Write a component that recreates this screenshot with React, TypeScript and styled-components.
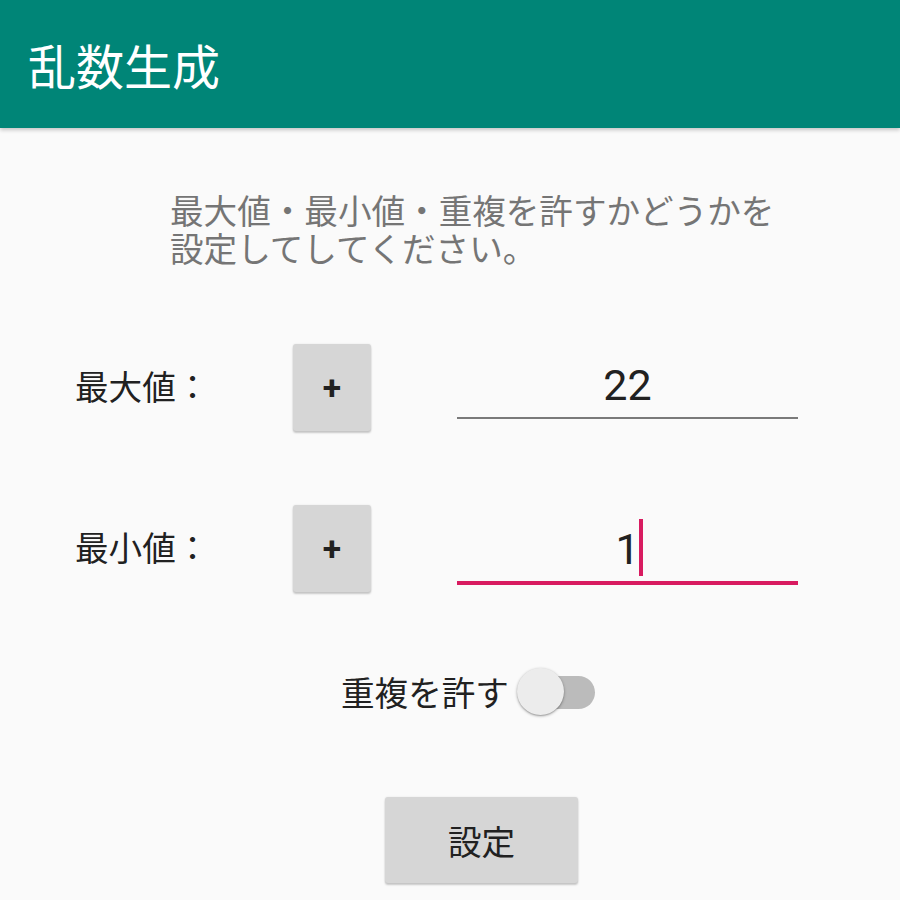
import React from "react";
import styled, { createGlobalStyle, css } from "styled-components";

const GlobalStyle = createGlobalStyle`
  html, body {
    margin: 0;
    padding: 0;
    background: #fafafa;
  }
  body {
    font-family: "Noto Sans CJK JP", "Noto Sans", sans-serif;
    color: #212121;
  }
  * { box-sizing: border-box; }
`;

const Screen = styled.div`
  width: 900px;
  height: 900px;
  background: #fafafa;
  overflow: hidden;
  display: flex;
  flex-direction: column;
`;

const AppBar = styled.header`
  height: 128px;
  flex: 0 0 128px;
  background: #008577;
  display: flex;
  align-items: center;
  padding-left: 28px;
  box-shadow: 0 2px 4px rgba(0, 0, 0, 0.22);
  position: relative;
  z-index: 1;
`;

const Title = styled.h1`
  margin: 0;
  font-family: "Noto Sans CJK JP", sans-serif;
  font-size: 48px;
  font-weight: 400;
  line-height: 56px;
  color: #ffffff;
`;

const Content = styled.main`
  display: flex;
  flex-direction: column;
`;

const Description = styled.p`
  margin: 63px 0 0 170px;
  width: 615px;
  font-size: 33.6px;
  line-height: 38px;
  color: #757575;
`;

const FormRow = styled.div<{ $top: number }>`
  display: flex;
  align-items: center;
  padding-left: 75px;
  margin-top: ${(p) => p.$top}px;
  height: 87px;
`;

const Label = styled.span`
  width: 218px;
  font-size: 33.6px;
  line-height: 38px;
  color: #212121;
  margin-top: -3px;
`;

const PlusButton = styled.button`
  width: 78px;
  height: 87px;
  border: none;
  border-radius: 3px;
  background: #d6d6d6;
  box-shadow: 0 2px 2px rgba(0, 0, 0, 0.2), 0 0 2px rgba(0, 0, 0, 0.1);
  font-family: Roboto, sans-serif;
  font-size: 33.6px;
  font-weight: 700;
  color: #212121;
  padding: 0;
  display: flex;
  align-items: center;
  justify-content: center;
`;

const Field = styled.div<{ $focused?: boolean }>`
  align-self: flex-start;
  margin-left: 86px;
  width: 341px;
  margin-top: ${(p) => (p.$focused ? 23 : 20)}px;
  display: flex;
  flex-direction: column;
`;

const ValueLine = styled.div`
  height: 43px;
  display: flex;
  justify-content: center;
  align-items: center;
`;

const Value = styled.span`
  position: relative;
  font-family: Roboto, sans-serif;
  font-size: 43px;
  line-height: 43px;
  color: #212121;
`;

const Caret = styled.span`
  position: absolute;
  left: 100%;
  margin-left: -1px;
  top: -9px;
  width: 4px;
  height: 57px;
  background: #d81b60;
`;

const Underline = styled.div<{ $focused?: boolean }>`
  margin-top: 10px;
  ${(p) =>
    p.$focused
      ? css`
          height: 4px;
          background: #d81b60;
        `
      : css`
          height: 2px;
          background: #7a7a7a;
        `}
`;

const SwitchRow = styled.label`
  display: flex;
  align-items: center;
  padding-left: 341px;
  margin-top: 76px;
  height: 48px;
`;

const SwitchText = styled.span`
  font-size: 33.6px;
  line-height: 38px;
  color: #212121;
  margin-right: 8px;
`;

const SwitchBox = styled.span`
  position: relative;
  width: 78px;
  height: 48px;
  display: inline-block;
`;

const Track = styled.span`
  position: absolute;
  right: 0;
  top: 8px;
  width: 66px;
  height: 33px;
  border-radius: 17px;
  background: #bbbbbb;
`;

const Thumb = styled.span`
  position: absolute;
  left: 0;
  top: 0;
  width: 47px;
  height: 47px;
  border-radius: 50%;
  background: #ececec;
  box-shadow: 0 1px 3px rgba(0, 0, 0, 0.35), 0 1px 1px rgba(0, 0, 0, 0.12);
`;

const SubmitRow = styled.div`
  display: flex;
  justify-content: flex-start;
  padding-left: 385px;
  margin-top: 81px;
`;

const SubmitButton = styled.button`
  width: 193px;
  height: 86px;
  border: none;
  border-radius: 3px;
  background: #d6d6d6;
  box-shadow: 0 2px 2px rgba(0, 0, 0, 0.2), 0 0 2px rgba(0, 0, 0, 0.1);
  font-family: "Noto Sans CJK JP", sans-serif;
  font-size: 33.6px;
  font-weight: 400;
  color: #212121;
  padding: 0;
`;

export default function App() {
  return (
    <>
      <GlobalStyle />
      <Screen>
        <AppBar>
          <Title>乱数生成</Title>
        </AppBar>
        <Content>
          <Description>
            最大値・最小値・重複を許すかどうかを設定してしてください。
          </Description>
          <FormRow $top={77}>
            <Label>最大値：</Label>
            <PlusButton>+</PlusButton>
            <Field>
              <ValueLine>
                <Value>22</Value>
              </ValueLine>
              <Underline />
            </Field>
          </FormRow>
          <FormRow $top={74}>
            <Label>最小値：</Label>
            <PlusButton>+</PlusButton>
            <Field $focused>
              <ValueLine>
                <Value>
                  1
                  <Caret />
                </Value>
              </ValueLine>
              <Underline $focused />
            </Field>
          </FormRow>
          <SwitchRow>
            <SwitchText>重複を許す</SwitchText>
            <SwitchBox>
              <Track />
              <Thumb />
            </SwitchBox>
          </SwitchRow>
          <SubmitRow>
            <SubmitButton>設定</SubmitButton>
          </SubmitRow>
        </Content>
      </Screen>
    </>
  );
}
